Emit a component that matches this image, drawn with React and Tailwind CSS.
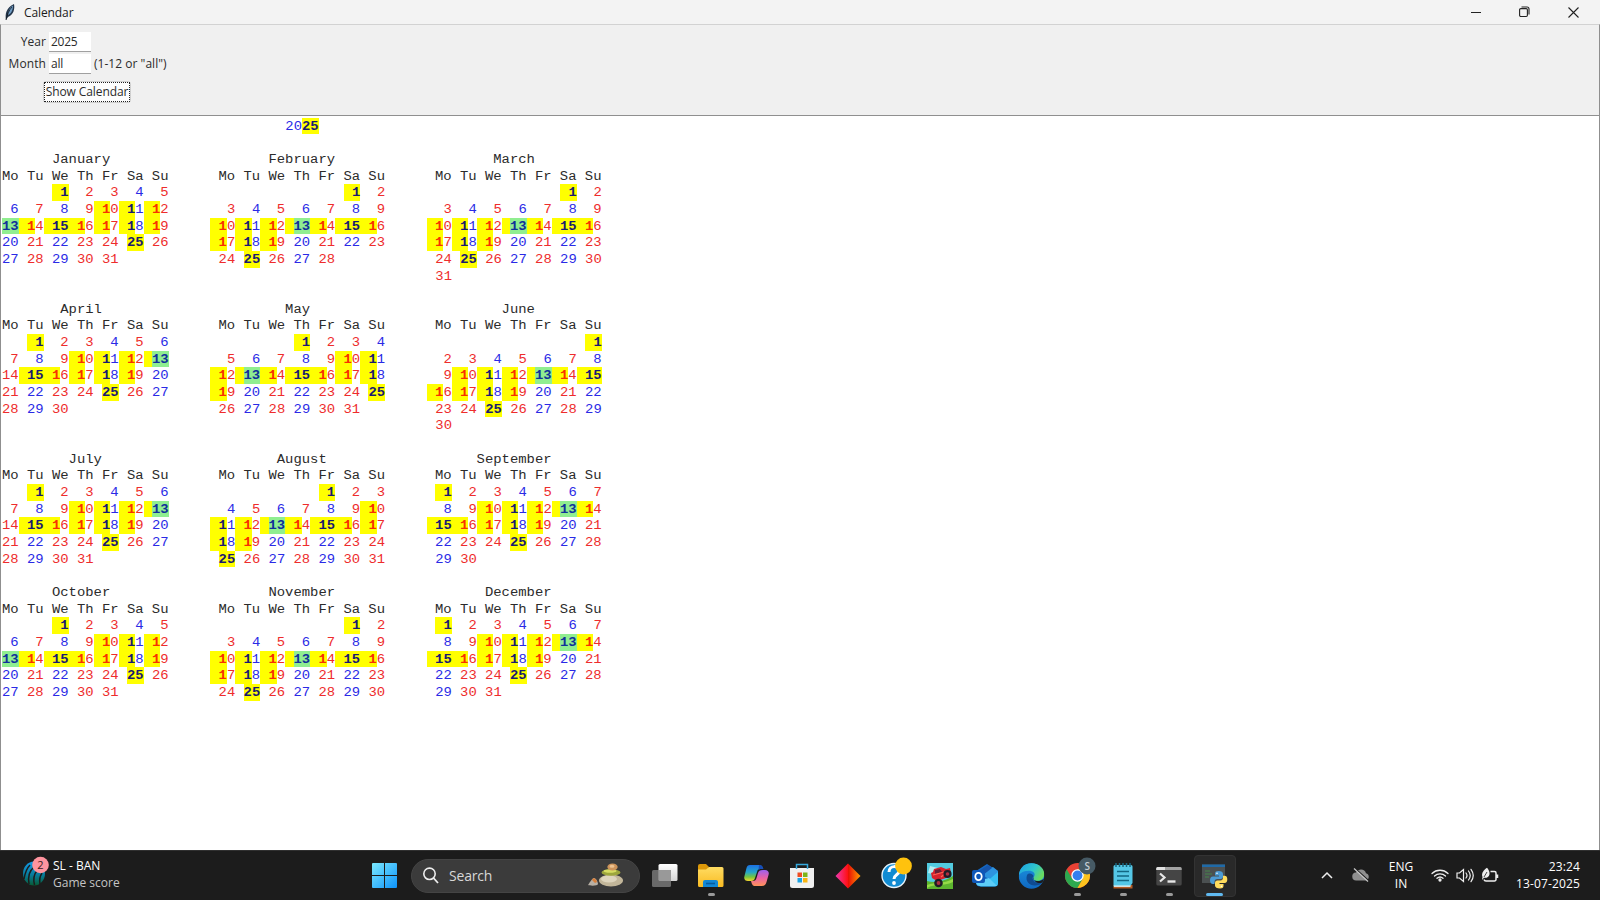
import React from "react";

const MONTHS = ["January", "February", "March", "April", "May", "June", "July", "August", "September", "October", "November", "December"];
const BLUE = [1, 4, 6, 8, 11, 13, 15, 18, 20, 22, 25, 27, 29];

const pad = (s, n) => s + " ".repeat(Math.max(0, n - s.length));

function monthLines(m) {
  const first = (new Date(2025, m, 1).getDay() + 6) % 7;
  const days = new Date(2025, m + 1, 0).getDate();
  const title = MONTHS[m];
  const lines = [" ".repeat(Math.floor((20 - title.length) / 2)) + title, "Mo Tu We Th Fr Sa Su"];
  for (let start = 1 - first; start <= days; start += 7) {
    const cells = [];
    for (let d = start; d < start + 7; d++) cells.push(d < 1 || d > days ? "  " : String(d).padStart(2));
    lines.push(cells.join(" "));
  }
  return lines;
}

function yearLines() {
  const out = [" ".repeat(34) + "2025", ""];
  for (let q = 0; q < 4; q++) {
    const cols = [0, 1, 2].map((i) => monthLines(q * 3 + i));
    const n = Math.max(...cols.map((c) => c.length));
    for (let r = 0; r < n; r++) out.push(cols.map((c) => pad(c[r] || "", 20)).join("      ").trimEnd());
    out.push("");
  }
  return out;
}

// Splits one line into runs of characters that share a text colour and a highlight.
function runs(line) {
  const tags = Array.from(line, () => ({ color: "text-[#2b2b2b]", bg: "", bold: false }));
  for (const m of line.matchAll(/\d\d?/g)) {
    const blue = BLUE.includes(Number(m[0]));
    for (let i = 0; i < m[0].length; i++) tags[m.index + i].color = blue ? "text-[#2a2ae6]" : "text-[#ee2c2c]";
  }
  const mark = (i, bg, color) => {
    tags[i] = { color, bg, bold: true };
  };
  for (const m of line.matchAll(/ 1/g)) {
    const color = tags[m.index + 1].color === "text-[#2a2ae6]" ? "text-[#1a1a70]" : "text-[#f83000]";
    mark(m.index, "bg-[#ffff00]", color);
    mark(m.index + 1, "bg-[#ffff00]", color);
  }
  for (const m of line.matchAll(/15|25|13/g)) {
    const green = m[0] === "13";
    for (const i of [m.index, m.index + 1]) mark(i, green ? "bg-[#90ee90]" : "bg-[#ffff00]", green ? "text-[#10309a]" : "text-[#1a1a70]");
  }
  const out = [];
  tags.forEach((t, i) => {
    const last = out[out.length - 1];
    if (last && last.color === t.color && last.bg === t.bg) last.text += line[i];
    else out.push({ ...t, text: line[i] });
  });
  return out;
}

function Line({ line }) {
  return (
    <div className="flex h-[16.667px] whitespace-pre leading-[16.667px]">
      {runs(line).map((r, i) => (
        <span key={i} className={`block h-full shrink-0 ${r.color} ${r.bg} ${r.bold ? "font-bold" : ""}`} style={{ width: r.text.length * 8.3333 }}>
          <span className="block origin-[50%_60%] scale-y-[0.88]">{r.text}</span>
        </span>
      ))}
    </div>
  );
}

const Feather = () => (
  <svg width="12" height="18" viewBox="0 0 12 18">
    <path d="M2 17C1 11 2 5 10 1c1 5-.5 11-6 13z" fill="#24364b" />
    <path d="M4 12C4 8 6 4 9 2.500c0 4-1.500 8-5 9.500z" fill="#6f9cc4" />
    <path d="M2 17C3 12 5 7 8 4" stroke="#101820" strokeWidth=".8" fill="none" />
  </svg>
);

const ScoreIcon = () => (
  <svg width="28" height="32" viewBox="0 0 28 32">
    <defs>
      <linearGradient id="ball" x1="0" y1="0" x2="0" y2="1"><stop offset="0" stopColor="#139bea" /><stop offset=".55" stopColor="#087c9c" /><stop offset="1" stopColor="#075b35" /></linearGradient>
    </defs>
    <ellipse cx="12" cy="17.500" rx="11" ry="12" fill="url(#ball)" />
    <path d="M2 23C3 17 4 13 8 9M7 28C6 22 7 15 12 11M12.500 29c-1.500-6-.5-11 3-15M18 28c-1-5 0-8 2-11" stroke="#1c1c1c" strokeWidth="1.500" fill="none" />
    <circle cx="18.500" cy="9" r="8.300" fill="#ff949f" />
  </svg>
);

const Start = () => (
  <svg width="25" height="25" viewBox="0 0 25 25">
    <defs><linearGradient id="win" x1="0" y1="0" x2="1" y2="1"><stop offset="0" stopColor="#7be9ff" /><stop offset="1" stopColor="#0d93fb" /></linearGradient></defs>
    <path d="M1 0h11v12H0V1a1 1 0 0 1 1-1zM13 0h11a1 1 0 0 1 1 1v11H13zM0 13h12v12H1a1 1 0 0 1-1-1zM13 13h12v11a1 1 0 0 1-1 1H13z" fill="url(#win)" />
  </svg>
);

const Stones = () => (
  <svg width="36" height="25" viewBox="0 0 36 25">
    <path d="M1 22c1-1 4-7 6-7s4 4 4 6-8 2-10 1z" fill="#b8b0a5" />
    <path d="M5 17c1-3 4-2 5 2l-2 1z" fill="#d77f3b" />
    <ellipse cx="24" cy="17.500" rx="12" ry="6" fill="#c2b69a" />
    <ellipse cx="22" cy="16" rx="8" ry="3.500" fill="#ddd4bd" />
    <ellipse cx="24" cy="9.500" rx="9.500" ry="3.300" fill="#9da63c" />
    <ellipse cx="23" cy="8" rx="6.500" ry="1.700" fill="#d6dc62" />
    <ellipse cx="25.500" cy="4" rx="5.200" ry="3.500" fill="#cd945b" />
    <ellipse cx="25" cy="3.300" rx="2.500" ry="1.500" fill="#edc291" />
  </svg>
);

const TaskView = () => (
  <svg width="26" height="26" viewBox="0 0 26 26">
    <defs><linearGradient id="tv" x1="0" y1="0" x2="0" y2="1"><stop offset="0" stopColor="#fff" /><stop offset="1" stopColor="#d5d5d5" /></linearGradient></defs>
    <rect x="6.500" y="1" width="19" height="17" rx="1.500" fill="url(#tv)" />
    <rect x="0" y="7" width="19" height="17" rx="1.500" fill="#777" opacity=".85" />
    <path d="M6.500 7H19v11H8a1.500 1.500 0 0 1-1.500-1.500z" fill="#999" />
  </svg>
);

const Folder = () => (
  <svg width="26" height="26" viewBox="0 0 26 26">
    <defs><linearGradient id="fold" x1="0" y1="0" x2="0" y2="1"><stop offset="0" stopColor="#ffdc62" /><stop offset="1" stopColor="#f9bb22" /></linearGradient></defs>
    <path d="M0 3a2 2 0 0 1 2-2h6l3 3-3 5H0z" fill="#dc9809" />
    <path d="M0 6.500h8L11 4h13a1.500 1.500 0 0 1 1.500 1.500v17a1.500 1.500 0 0 1-1.500 1.500H1.500A1.500 1.500 0 0 1 0 22.500z" fill="url(#fold)" />
    <path d="M5 24v-5a2 2 0 0 1 2-2h11a2 2 0 0 1 2 2v5z" fill="#1287d4" />
    <path d="M8 20.500h9" stroke="#075b9d" strokeWidth="1.600" />
  </svg>
);

const Copilot = () => (
  <svg width="26" height="26" viewBox="0 0 26 26">
    <defs>
      <linearGradient id="cpa" x1="0" y1="0" x2="0" y2="1"><stop offset="0" stopColor="#1c70e5" /><stop offset=".45" stopColor="#25a6c9" /><stop offset=".75" stopColor="#76c63c" /><stop offset="1" stopColor="#f4d62d" /></linearGradient>
      <linearGradient id="cpb" x1="0" y1="0" x2="0" y2="1"><stop offset="0" stopColor="#9c60ef" /><stop offset=".5" stopColor="#e962a5" /><stop offset="1" stopColor="#ff9357" /></linearGradient>
    </defs>
    <path d="M6 2h9c2 0 3 1 4 4h-3c-2 0-2.500 1-3 3l-2 6c-.6 2-1.500 3-4 3H4c-3 0-4.500-2-3.500-5l2-8C3 3 4 2 6 2z" fill="url(#cpa)" />
    <path d="M15 2h1c2 0 2.500 1 3.500 4H16l-1.500 1z" fill="#174eb7" />
    <path d="M19 7h2c3 0 4.500 2 3.500 5l-2 7c-.7 2.500-2 4-4.500 4h-7c-2 0-3-1-4-5h2c2 0 3-1 3.500-3L14 10c.6-2 1.800-3 5-3z" fill="url(#cpb)" />
  </svg>
);

const Store = () => (
  <svg width="26" height="26" viewBox="0 0 26 26">
    <path d="M1 5h24v17.500a2.500 2.500 0 0 1-2.500 2.500h-19A2.500 2.500 0 0 1 1 22.500z" fill="#f0f0f0" />
    <path d="M7.500 6V1.500h11V6" stroke="#35a8dc" strokeWidth="1.500" fill="none" />
    <path d="M8.500 9.500h4.500V14H8.500z" fill="#ef4d22" /><path d="M14 9.500h4.500V14H14z" fill="#7cb518" />
    <path d="M8.500 15h4.500v4.500H8.500z" fill="#1ba3e3" /><path d="M14 15h4.500v4.500H14z" fill="#f9b510" />
  </svg>
);

const Diamond = () => (
  <svg width="26" height="26" viewBox="0 0 26 26">
    <defs><linearGradient id="dia"><stop offset="0" stopColor="#f037b0" /><stop offset=".5" stopColor="#ff1010" /><stop offset=".52" stopColor="#e91205" /><stop offset="1" stopColor="#ff9d00" /></linearGradient></defs>
    <path d="M13 .5L25.500 13 13 25.500.5 13z" fill="url(#dia)" />
  </svg>
);

const Help = () => (
  <svg width="32" height="32" viewBox="0 0 32 32" className="translate-x-[3px] -translate-y-[3px]">
    <circle cx="13" cy="18.500" r="12" fill="#118bd2" stroke="#e5f3fb" strokeWidth="1.400" />
    <path d="M8 15c0-7 10-7 10-1 0 4-5 3.500-5 8" stroke="#fff" strokeWidth="3" fill="none" /><circle cx="13" cy="26" r="1.900" fill="#fff" />
    <circle cx="22.500" cy="9" r="8.400" fill="#ffc20e" />
  </svg>
);

const Truck = () => (
  <svg width="26" height="26" viewBox="0 0 26 26">
    <path d="M0 0h26v26H0z" fill="#52cbe0" />
    <path d="M3 3l8 2-5 6-5-1z" fill="#b5edf2" />
    <path d="M0 18c8 2 16 1 26-5v13H0z" fill="#5db62f" /><path d="M0 22c9-3 16-1 26-6v3C16 24 8 20 0 25z" fill="#96dc47" />
    <path d="M4 10l2-1 1-3 7-2 5 2 4-1 1 5-5 5-9 3-5-3z" fill="#d6222d" /><path d="M8 7l5-1 2 3-7 2z" fill="#642036" />
    <path d="M6 12l11-3M14 14l5-4" stroke="#ff6554" strokeWidth="1.200" />
    <circle cx="11.500" cy="20" r="4.300" fill="#1e1d26" /><circle cx="20.500" cy="11" r="4.100" fill="#1e1d26" />
    <circle cx="11.500" cy="20" r="1.900" fill="#ad3040" /><circle cx="20.500" cy="11" r="1.800" fill="#ad3040" />
  </svg>
);

const Outlook = () => (
  <svg width="28" height="26" viewBox="0 0 28 26" className="-translate-x-[1px]">
    <path d="M5 8L16 1l11 7v12a3.500 3.500 0 0 1-3.500 3.500H9A4 4 0 0 1 5 20z" fill="#1467c2" />
    <path d="M14 8l8-4 5 4v2l-9 6-7-4z" fill="#2d93df" /><path d="M8 8l9-6 4 3-9 7z" fill="#1755ac" />
    <path d="M27 9v11a3.500 3.500 0 0 1-3.500 3.500H9z" fill="#35bdf2" /><path d="M14 16l4 -1 8 8h-17A4 4 0 0 1 5 20z" fill="#5dcdf8" />
    <rect x="1" y="7" width="13" height="13" rx="2" fill="#0f57b8" />
    <ellipse cx="7.500" cy="13.500" rx="3.200" ry="3.700" fill="none" stroke="#fff" strokeWidth="1.800" />
  </svg>
);

const Edge = () => (
  <svg width="26" height="26" viewBox="0 0 26 26" className="-translate-x-[0.5px]">
    <defs>
      <linearGradient id="ea" x1="0" y1="0" x2="1" y2=".5"><stop offset="0" stopColor="#1c9fe4" /><stop offset=".6" stopColor="#2fc5cc" /><stop offset="1" stopColor="#68da61" /></linearGradient>
      <linearGradient id="eb" x1="0" y1="0" x2="0" y2="1"><stop offset="0" stopColor="#1c93df" /><stop offset="1" stopColor="#0f68c1" /></linearGradient>
    </defs>
    <circle cx="13" cy="13" r="12.700" fill="url(#eb)" />
    <path d="M.4 12C1 5 6 .3 13 .3c7 0 12.700 5 12.700 10.500 0 5-3 7-6.500 7-4 0-5-2-4-3.500 2.500-4-.5-6.500-5-6.500-4 0-8 1.500-9.800 4.200z" fill="url(#ea)" />
    <path d="M8.500 12c-2 6 2 10.500 8 10.500 3 0 5.500-1 7.500-3-5 1.500-9.500-.5-10-4.500l1-2c-1-2.500-4.500-3.500-6.500-1z" fill="#104b91" />
    <path d="M15 14c-1 2.500 1 4 4.500 4 2 0 4-.6 6-2.500l-1.500 4c-4 1.500-9 0-9-5.500z" fill="#1c1c1c" />
  </svg>
);

const Chrome = () => (
  <svg width="32" height="32" viewBox="0 0 32 32" className="translate-x-[3.500px] -translate-y-[3px]">
    <circle cx="13" cy="18.500" r="12.500" fill="#e94235" />
    <path d="M2.200 12.200A12.500 12.500 0 0 0 13 31l5.500-9.500L13 18.500 7.600 21.600z" fill="#2da94f" />
    <path d="M13 31a12.500 12.500 0 0 0 10.900-18.700H13l5.500 9.200z" fill="#fcc31e" />
    <circle cx="13" cy="18.500" r="6.200" fill="#fff" /><circle cx="13" cy="18.500" r="4.900" fill="#347ff0" />
    <circle cx="22.500" cy="9" r="8.500" fill="#465a65" />
  </svg>
);

const Notepad = () => (
  <svg width="20" height="26" viewBox="0 0 20 26">
    <path d="M.5 22h19v3.500H.5z" fill="#b55b25" />
    <path d="M.5 3.500A1.500 1.500 0 0 1 2 2h16a1.500 1.500 0 0 1 1.500 1.500V20L17 23.500H.5z" fill="#55c7e6" />
    <path d="M1 22.500h16.500v1.300H1z" fill="#eaf5f7" />
    <path d="M4 8.500h12M4 13h12M4 17.500h12" stroke="#126783" strokeWidth="1.500" />
    <path d="M3 0v4M6.500 0v4M10 0v4M13.500 0v4M17 0v4" stroke="#186780" strokeWidth="1.500" />
  </svg>
);

const Terminal = () => (
  <svg width="26" height="26" viewBox="0 0 26 26">
    <rect x=".3" y="4" width="25.400" height="18.500" rx="1.500" fill="#454545" />
    <path d="M.3 5.500A1.500 1.500 0 0 1 1.800 4h22.400a1.500 1.500 0 0 1 1.500 1.500V7H.3z" fill="#a2a2a2" /><path d="M.3 5.500A1.500 1.500 0 0 1 1.800 4H9v3H.3z" fill="#e1e1e1" />
    <path d="M4 10.500l4.500 4L4 18.500" stroke="#e7e7e7" strokeWidth="2.200" fill="none" /><path d="M11.500 18.500h8" stroke="#e7e7e7" strokeWidth="2.400" />
  </svg>
);

const Python = () => (
  <svg width="26" height="26" viewBox="0 0 26 26">
    <path d="M0 1.500h23V20H0z" fill="#4b5051" /><path d="M0 1.500h23V4H0z" fill="#1f6aa8" />
    <path d="M3 8h5M3 11h7M3 14h4" stroke="#47834a" strokeWidth="1.200" />
    <path d="M16.500 8c-3 0-3.500 1-3.500 3v1.500h4v1h-6c-2 0-3 1.500-3 3.800 0 2.400 1 3.700 3 3.700h1.500v-2c0-2 1-3 3-3h3c1.500 0 2.500-1 2.500-2.500V11c0-2-1.500-3-4.500-3z" fill="#4c9bd4" />
    <path d="M18 25.500c3 0 3.500-1 3.500-3V21h-4v-1h5c2 0 2.800-1.500 2.800-3.700 0-2.400-1-3.500-2.800-3.500H21v2c0 1.700-1 2.700-2.500 2.700h-3c-1.500 0-2.500 1-2.500 2.500v2.500c0 2 2 3 5 3z" fill="#ffdc5c" />
    <circle cx="15" cy="10.300" r=".8" fill="#fff" /><circle cx="19.500" cy="23.200" r=".8" fill="#fff" />
  </svg>
);

const APPS = [
  { Icon: TaskView }, { Icon: Folder, run: true }, { Icon: Copilot }, { Icon: Store }, { Icon: Diamond }, { Icon: Help }, { Icon: Truck },
  { Icon: Outlook }, { Icon: Edge }, { Icon: Chrome, run: true, badge: "S" }, { Icon: Notepad, run: true }, { Icon: Terminal, run: true }, { Icon: Python, active: true },
];

function AppButton({ Icon, run, active, badge }) {
  return (
    <div className="relative flex h-full w-[45.83px] shrink-0 items-center justify-center">
      {active && <span className="absolute left-[2px] top-[4px] h-[42px] w-[42px] rounded-[4px] border border-[#333333] bg-[#292929]" />}
      <span className="relative flex">
        <Icon />
        {badge && <span className="absolute left-[17.5px] top-[-1px] w-[17px] text-center text-[10px] font-semibold leading-[14px] text-[#c5ced3]">{badge}</span>}
      </span>
      {run && <span className="absolute bottom-[4px] left-[20px] h-[3px] w-[7px] rounded-full bg-[#9a9a9a]" />}
      {active && <span className="absolute bottom-[4px] left-[14px] h-[3px] w-[17px] rounded-full bg-[#60b9f0]" />}
    </div>
  );
}

function TitleBar() {
  return (
    <header className="flex h-6 shrink-0 items-center bg-[#f3f3f3] pl-1">
      <Feather />
      <span className="ml-2 pt-px text-[12px] leading-6 tracking-[-0.1px] text-[#1b1b1b]">Calendar</span>
      <div className="ml-auto flex items-center pr-[21px]">
        <svg width="10" height="11" viewBox="0 0 10 11"><path d="M0 5.500h10" stroke="#222" /></svg>
        <svg className="ml-[38px]" width="11" height="12" viewBox="0 0 11 12"><rect x=".6" y="2.600" width="7.800" height="7.900" rx="1.200" fill="none" stroke="#222" strokeWidth="1.100" /><path d="M2.500 1H8a2 2 0 0 1 2 2v5.500" fill="none" stroke="#222" strokeWidth="1.100" /></svg>
        <svg className="ml-[38px]" width="11" height="11" viewBox="0 0 11 11"><path d="M.5.5l10 10M10.500.5l-10 10" stroke="#222" strokeWidth="1.100" /></svg>
      </div>
    </header>
  );
}

function Field({ label, value, hint, className = "" }) {
  return (
    <div className={`flex h-[20px] items-center ${className}`}>
      <label className="w-[45px] text-right">{label}</label>
      <span className="ml-[3px] h-[20px] w-[42px] border-b border-[#a0a0a0] bg-white pl-[2px] leading-[19px] tracking-[-0.25px]">{value}</span>
      <span className="ml-[3px] tracking-[0.03px]">{hint}</span>
    </div>
  );
}

function Taskbar() {
  return (
    <footer className="flex h-[50px] shrink-0 items-center border-t border-[#303030] bg-[#1c1c1c] text-white">
      <div className="flex w-[372px] items-center pl-[22px]">
        <span className="relative -mt-[7px] flex">
          <ScoreIcon />
          <span className="absolute left-[10px] top-[1px] w-[17px] text-center text-[11px] leading-4 text-[#3a2020]">2</span>
        </span>
        <div className="ml-[3px] pb-[3px] text-[12px] leading-[17px]">
          <div>SL - BAN</div>
          <div className="text-[#c4c4c4]">Game score</div>
        </div>
      </div>
      <Start />
      <div className="ml-[14px] flex h-[34px] w-[229px] items-center rounded-full border border-[#444444] bg-[#3b3b3b] pl-[11px] pr-[16px]">
        <svg width="16" height="17" viewBox="0 0 16 17"><circle cx="6.500" cy="6.800" r="5.700" fill="none" stroke="#eee" strokeWidth="1.600" /><path d="M10.500 11l4.500 5" stroke="#eee" strokeWidth="1.800" /></svg>
        <span className="ml-[10px] text-[14px] tracking-[-0.2px] text-[#d7d7d7]">Search</span>
        <span className="ml-auto"><Stones /></span>
      </div>
      <div className="ml-[2px] flex h-full">
        {APPS.map((app, i) => <AppButton key={i} {...app} />)}
      </div>
      <div className="ml-auto flex items-center pb-px pr-[20px] text-[12px] leading-[17px]">
        <svg width="12" height="8" viewBox="0 0 12 8"><path d="M1 7l5-5 5 5" fill="none" stroke="#eee" strokeWidth="1.500" /></svg>
        <svg className="ml-[19px]" width="18" height="14" viewBox="0 0 18 14"><path d="M4.500 12.500a4 4 0 0 1-.5-8 5.500 5.500 0 0 1 10 .7 3.800 3.800 0 0 1 0 7.300z" fill="#8f8f8f" /><path d="M3 .5l14 12.500" stroke="#1c1c1c" strokeWidth="1.500" /><path d="M2 .5l14 13" stroke="#c8c8c8" strokeWidth="1.200" /></svg>
        <div className="ml-[18px] w-[26px] text-center">ENG<br />IN</div>
        <svg className="ml-[17px]" width="18" height="14" viewBox="0 0 18 14" fill="none" stroke="#eee" strokeWidth="1.300" strokeLinecap="round"><path d="M1 5.500a11.500 11.500 0 0 1 16 0M3.500 8a8 8 0 0 1 11 0M6 10.300a4.500 4.500 0 0 1 6 0" /><circle cx="9" cy="12" r="1" fill="#eee" /></svg>
        <svg className="ml-[7px]" width="18" height="15" viewBox="0 0 18 15" fill="none" stroke="#eee" strokeWidth="1.200" strokeLinecap="round"><path d="M1 5h2.500L7.500 1.500v12L3.500 10H1zM10 5q2 2.500 0 5M12.500 3q3.500 4.500 0 9M15 1.300q4.500 6.200 0 12.400" /></svg>
        <svg className="ml-[7px]" width="18" height="16" viewBox="0 0 18 16"><path d="M9.500 4.500h4A1.500 1.500 0 0 1 15 6v6.500a1.500 1.500 0 0 1-1.500 1.500H5a2 2 0 0 1-2-1.500M16.500 7.500v3.500" fill="none" stroke="#eee" strokeWidth="1.500" /><path d="M1.500 10C0 6 3 3 6 .8 9 4 10 9 5.500 10.800H3L1 13z" fill="#eee" /><path d="M3 10l3-5" stroke="#1c1c1c" strokeWidth=".8" /></svg>
        <div className="ml-[10px] w-[71px] whitespace-nowrap text-right tracking-[0.15px]">23:24<br />13-07-2025</div>
      </div>
    </footer>
  );
}

export default function App() {
  return (
    <div className="flex h-[900px] w-[1600px] flex-col overflow-hidden bg-white font-['Open_Sans','Noto_Sans',sans-serif]">
      <TitleBar />
      <main className="flex min-h-0 flex-1 flex-col border-x border-t border-[#8f8f8f] border-t-[#d2d2d2]">
        <section className="h-[90px] shrink-0 bg-[#f0f0f0] pt-[7px] text-[12px] tracking-[0.08px] text-[#2b2b2b]">
          <Field label="Year" value="2025" />
          <Field className="mt-[2px]" label="Month" value="all" hint={'(1-12 or "all")'} />
          <button className="ml-[42px] mt-[7px] flex h-[22px] w-[88px] items-center justify-center rounded-[3px] border border-[#d0d0d0] bg-[#fdfdfd]">
            <span className="flex h-[20px] w-[86px] shrink-0 items-center justify-center whitespace-nowrap border border-dotted border-[#202020] tracking-[-0.1px]">Show Calendar</span>
          </button>
        </section>
        <section className="min-h-0 flex-1 border-t border-[#8f8f8f] bg-white pl-[1px] pt-[1.6px] font-['Liberation_Mono',monospace] text-[13.889px]">
          {yearLines().map((line, i) => <Line key={i} line={line} />)}
        </section>
      </main>
      <Taskbar />
    </div>
  );
}
